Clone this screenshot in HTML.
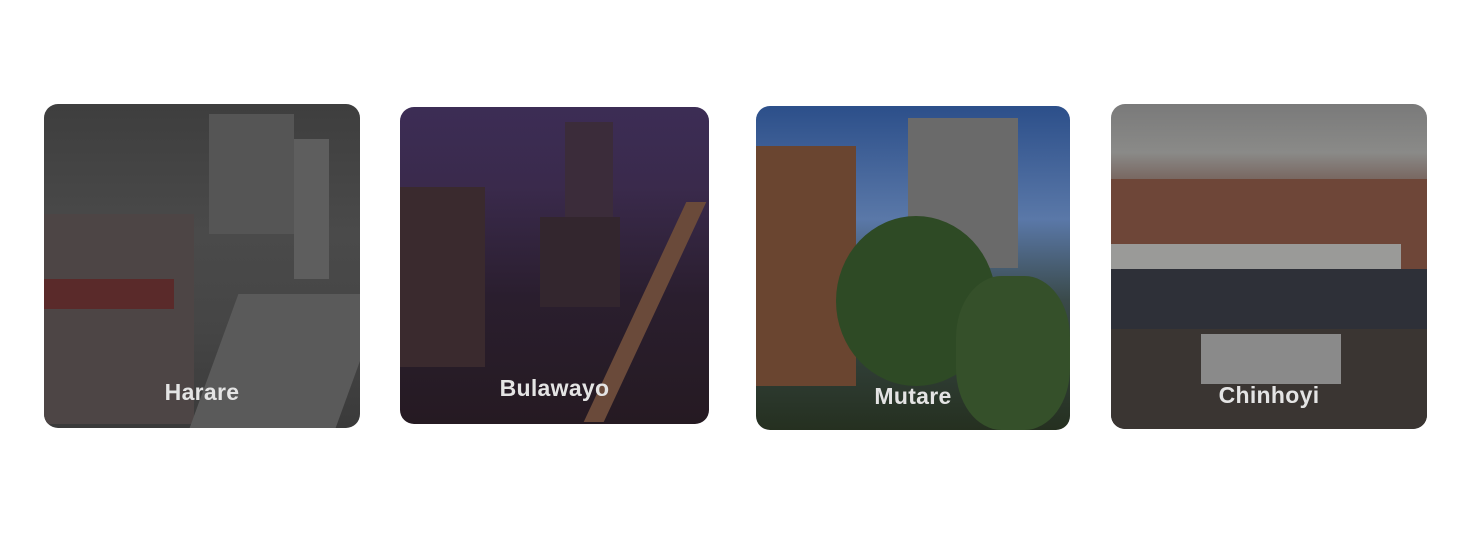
<!DOCTYPE html>
<html><head><meta charset="utf-8"><style>
body{margin:0;width:1478px;height:555px;background:#fff;position:relative;overflow:hidden;font-family:"Liberation Sans",sans-serif}
.c{position:absolute;border-radius:14px;overflow:hidden}
.c span{position:absolute;left:0;right:0;text-align:center;color:#e4e4e4;font-size:23px;font-weight:bold;letter-spacing:0.3px}
.b{position:absolute}
</style></head><body>
<div class="c" style="left:44px;top:104px;width:316px;height:324px;background:linear-gradient(180deg,#3e3e3e 0%,#4a4a4a 40%,#454545 70%,#3a3a3a 100%)">
<div class="b" style="left:165px;top:10px;width:85px;height:120px;background:#555"></div>
<div class="b" style="left:250px;top:35px;width:35px;height:140px;background:#5e5e5e"></div>
<div class="b" style="left:0;top:110px;width:150px;height:210px;background:#4d4545"></div>
<div class="b" style="left:0;top:175px;width:130px;height:30px;background:#5a2a2a"></div>
<div class="b" style="left:170px;top:190px;width:146px;height:134px;background:#5a5a5a;transform:skewX(-20deg)"></div>
<span style="top:275px">Harare</span></div>
<div class="c" style="left:400px;top:107px;width:309px;height:317px;background:linear-gradient(180deg,#3c2d55 0%,#3a2a4c 25%,#2a1e2e 60%,#251a22 100%)">
<div class="b" style="left:0;top:80px;width:85px;height:180px;background:#3a2a2e"></div>
<div class="b" style="left:165px;top:15px;width:48px;height:100px;background:#3b2c3a"></div>
<div class="b" style="left:140px;top:110px;width:80px;height:90px;background:#33262e"></div>
<div class="b" style="left:235px;top:95px;width:20px;height:220px;background:#6a4a3a;transform:skewX(-25deg)"></div>
<span style="top:268px">Bulawayo</span></div>
<div class="c" style="left:756px;top:106px;width:314px;height:324px;background:linear-gradient(180deg,#2c4f8a 0%,#5a78a8 35%,#3a4a4a 60%,#253020 100%)">
<div class="b" style="left:0;top:40px;width:100px;height:240px;background:#6a4530"></div>
<div class="b" style="left:152px;top:12px;width:110px;height:150px;background:#6a6a6a"></div>
<div class="b" style="left:80px;top:110px;width:160px;height:170px;background:#2e4a25;border-radius:50%"></div>
<div class="b" style="left:200px;top:170px;width:114px;height:154px;background:#35502a;border-radius:40%"></div>
<span style="top:277px">Mutare</span></div>
<div class="c" style="left:1111px;top:104px;width:316px;height:325px;background:linear-gradient(180deg,#7a7a7a 0%,#8a8a88 15%,#6a4a40 30%,#4a3a36 60%,#2a2a28 100%)">
<div class="b" style="left:0;top:75px;width:316px;height:90px;background:#6e4638"></div>
<div class="b" style="left:0;top:140px;width:290px;height:25px;background:#9a9a98"></div>
<div class="b" style="left:0;top:165px;width:316px;height:70px;background:#2e3038"></div>
<div class="b" style="left:0;top:225px;width:316px;height:100px;background:#3a3532"></div>
<div class="b" style="left:90px;top:230px;width:140px;height:50px;background:#8a8a8a"></div>
<span style="top:278px">Chinhoyi</span></div>
</body></html>
